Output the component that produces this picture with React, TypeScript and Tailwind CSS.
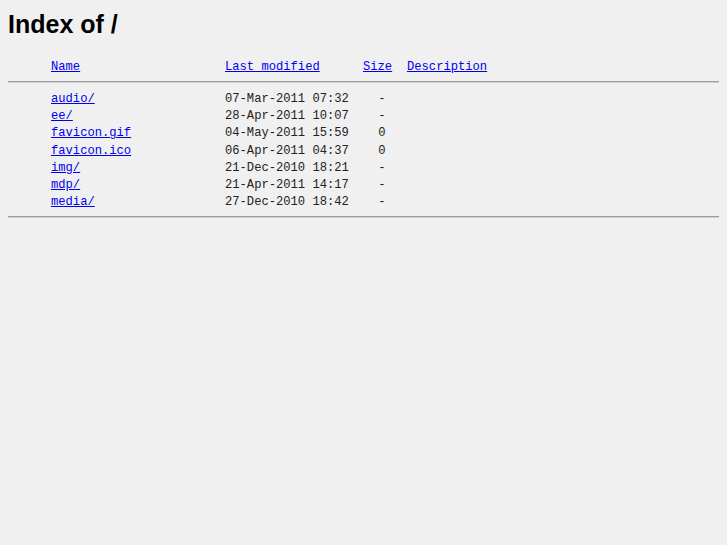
const entries = [
  { name: 'audio/', date: '07-Mar-2011 07:32', size: '-' },
  { name: 'ee/', date: '28-Apr-2011 10:07', size: '-' },
  { name: 'favicon.gif', date: '04-May-2011 15:59', size: '0' },
  { name: 'favicon.ico', date: '06-Apr-2011 04:37', size: '0' },
  { name: 'img/', date: '21-Dec-2010 18:21', size: '-' },
  { name: 'mdp/', date: '21-Apr-2011 14:17', size: '-' },
  { name: 'media/', date: '27-Dec-2010 18:42', size: '-' },
];

function Rule() {
  return <div className="h-[2px] border-t border-t-[#9c9c9c] border-b border-b-[#cfcfcf]" />;
}

export default function App() {
  return (
    <div className="min-h-screen bg-[#f0f0f0] p-2 text-black">
      <h1 className="mt-[1px] text-[25px] leading-[30px] font-bold font-['Liberation_Sans',Arial,sans-serif]">
        Index of /
      </h1>

      <div className="mt-[20px] font-['Liberation_Mono','Courier_New',monospace] text-[12.15px]">
        {/* Header row */}
        <div className="flex h-[17px] items-center leading-[17px]">
          <div className="w-[43px]" />
          <a href="#" className="w-[174px] text-[#0000ee] underline">Name</a>
          <a href="#" className="w-[138px] text-[#0000ee] underline">Last modified</a>
          <div className="w-[44px]">
            <a href="#" className="text-[#0000ee] underline">Size</a>
          </div>
          <a href="#" className="text-[#0000ee] underline">Description</a>
        </div>

        <div className="pt-[5px] pb-[8px]">
          <Rule />
        </div>

        {entries.map((e) => (
          <div key={e.name} className="flex h-[17.2px] items-center leading-[17px]">
            <div className="w-[43px]" />
            <div className="w-[174px]">
              <a href="#" className="text-[#0000ee] underline">{e.name}</a>
            </div>
            <div className="w-[138px] text-[#222]">{e.date}</div>
            <div className="w-[44px] pr-[21.5px] text-right text-[#222]">{e.size}</div>
            <div />
          </div>
        ))}

        <div className="pt-[5px]">
          <Rule />
        </div>
      </div>
    </div>
  );
}
